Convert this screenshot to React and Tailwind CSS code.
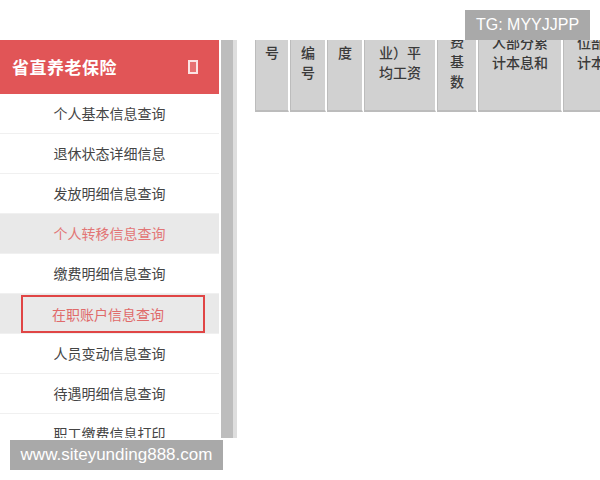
const menu = [
  { label: '个人基本信息查询' },
  { label: '退休状态详细信息' },
  { label: '发放明细信息查询' },
  { label: '个人转移信息查询', active: true },
  { label: '缴费明细信息查询' },
  { label: '在职账户信息查询', active: true, boxed: true },
  { label: '人员变动信息查询' },
  { label: '待遇明细信息查询' },
  { label: '职工缴费信息打印' },
];

// header cells of the account table, cut off by the page top
const columns = [
  { w: 'w-[34px]', lines: ['号'], offset: 'mt-[2px]' },
  { w: 'w-[36px]', lines: ['编', '号'], offset: 'mt-[2px]' },
  { w: 'w-[36px]', lines: ['度'], offset: 'mt-[2px]' },
  { w: 'w-[72px]', lines: ['业）平', '均工资'], offset: 'mt-[2px]' },
  { w: 'w-[40px]', lines: ['费', '基', '数'], offset: '-mt-[9px]' },
  { w: 'w-[84px]', lines: ['人部分累', '计本息和'], offset: '-mt-[8px]' },
  { w: 'w-[84px]', lines: ['位部分累', '计本息和'], offset: '-mt-[8px]' },
];

function Sidebar() {
  return (
    <div className="w-[219px] h-[398px] overflow-hidden bg-white">
      <div className="h-[54px] bg-[#e15557] flex items-center justify-between pl-[12px] pr-[21px]">
        <span className="text-white text-[17px] font-bold tracking-[0.5px]">省直养老保险</span>
        <span className="w-[10px] h-[14px] border-2 border-[#fbe3e3] bg-[#ef9a9a]/40" />
      </div>
      {menu.map((item, i) =>
        item.boxed ? (
          <div key={i} className="h-[40px] flex items-end border-b border-[#f0f0f0] bg-[#e9e9e9]">
            <div className="ml-[21px] w-[184px] h-[38px] border-2 border-[#e04545] flex items-center pl-[29px] text-[14px] text-[#e06a6a]">
              {item.label}
            </div>
          </div>
        ) : (
          <div
            key={i}
            className={
              'h-[40px] flex items-center justify-center border-b border-[#f0f0f0] text-[14px] ' +
              (item.active ? 'bg-[#e9e9e9] text-[#e27575]' : 'bg-white text-[#444]')
            }
          >
            {item.label}
          </div>
        )
      )}
    </div>
  );
}

function TableHead() {
  return (
    <div className="h-[75px] overflow-hidden flex gap-[1px] bg-white">
      {columns.map((c, i) => (
        <div
          key={i}
          className={`${c.w} shrink-0 h-[72px] bg-[#d1d1d1] border-l border-b-2 border-[#bcbcbc] border-r border-r-white flex flex-col items-center`}
        >
          <div className={`${c.offset} flex flex-col items-center`}>
            {c.lines.map((l, j) => (
              <span key={j} className="leading-[20px] text-[14px] font-medium text-[#3a3a3a]">
                {l}
              </span>
            ))}
          </div>
        </div>
      ))}
    </div>
  );
}

export default function App() {
  return (
    <div
      className="relative w-[600px] h-[480px] overflow-hidden bg-white"
      style={{ fontFamily: '"Noto Sans CJK SC", "Noto Sans", sans-serif' }}
    >
      <div className="h-[40px]" />
      <div className="flex items-start">
        <Sidebar />
        <div className="ml-[2px] w-[12px] h-[398px] bg-[#bdbdbd]" />
        <div className="w-[4px] h-[398px] bg-[#dedede]" />
        <div className="ml-[18px] flex-1 overflow-hidden">
          <TableHead />
        </div>
      </div>

      <div
        className="absolute left-[465px] top-[10px] w-[125px] h-[30px] bg-[#a9a9a9] flex items-center justify-center text-white text-[16px]"
        style={{ fontFamily: '"Liberation Sans", Arial, sans-serif' }}
      >
        TG: MYYJJPP
      </div>
      <div
        className="absolute left-[10px] top-[440px] w-[213px] h-[30px] bg-[#a9a9a9] flex items-center justify-center text-white text-[17px]"
        style={{ fontFamily: '"Liberation Sans", Arial, sans-serif' }}
      >
        www.siteyunding888.com
      </div>
    </div>
  );
}
